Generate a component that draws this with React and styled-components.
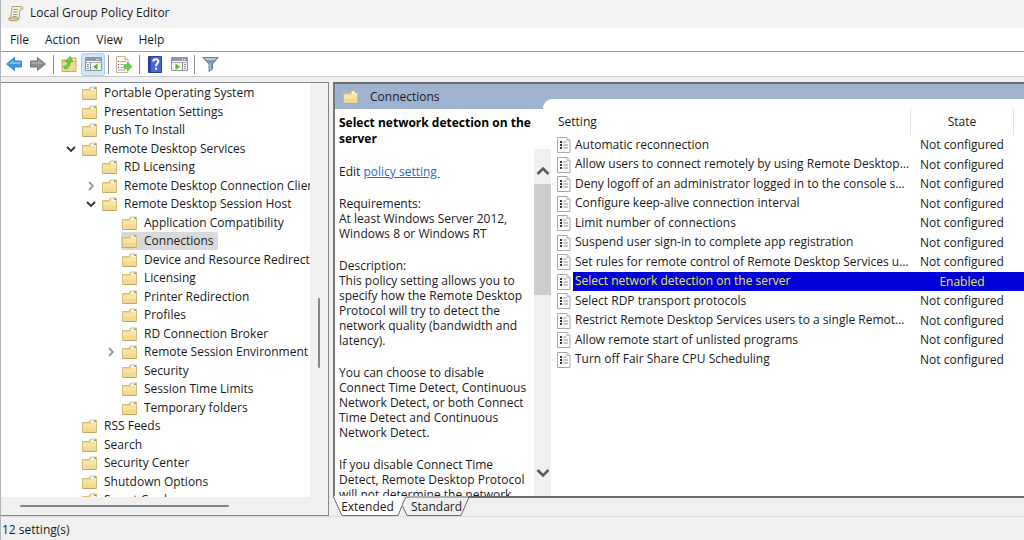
import React from "react";
import styled, { createGlobalStyle } from "styled-components";

const GlobalStyle = createGlobalStyle`
  *, *::before, *::after { box-sizing: border-box; }
  body {
    margin: 0;
    background: #f0f0f0;
    color: #1b1b1b;
    font-family: "Open Sans", "Noto Sans", sans-serif;
    font-size: 12px;
    line-height: 16px;
  }
  button { font: inherit; color: inherit; border: 0; background: none; padding: 0; }
  svg { display: block; flex: none; }
`;

const Window = styled.div`
  display: flex;
  flex-direction: column;
  height: 100vh;
  overflow: hidden;
  border-left: 1px solid #b4b4b8;
`;

const TitleBar = styled.header`
  display: flex;
  align-items: center;
  gap: 6px;
  height: 28px;
  flex: none;
  padding: 0 7px 2px;
  background: #f3f3f3;
`;

const Title = styled.h1`
  margin: 0;
  font-size: 12px;
  font-weight: 400;
`;

const MenuBar = styled.nav`
  display: flex;
  gap: 16px;
  height: 23px;
  flex: none;
  padding: 0 9px;
  background: #fff;
`;

const ToolBar = styled.div`
  display: flex;
  align-items: center;
  height: 26px;
  flex: none;
  padding-left: 1px;
  background: #fff;
  border-top: 1px solid #9a9aa2;
  border-bottom: 1px solid #c8c8c8;
`;

const ToolButton = styled.button`
  display: flex;
  align-items: center;
  justify-content: center;
  width: 24px;
  height: 23px;
  border-radius: 3px;
  background: ${(p) => (p.$active ? "#cce6fc" : "transparent")};
  border: 1px solid ${(p) => (p.$active ? "#a8d2f6" : "transparent")};
`;

const Divider = styled.span`
  width: 1px;
  height: 19px;
  margin: 0 3px;
  background: #8d8d8d;
`;

const Main = styled.main`
  display: grid;
  grid-template-columns: 328px minmax(0, 1fr);
  grid-template-rows: minmax(0, 1fr);
  gap: 4px;
  flex: 1;
  min-height: 0;
  padding: 5px 0 0;
`;

const TreePane = styled.section`
  display: grid;
  grid-template-columns: minmax(0, 1fr) 18px;
  grid-template-rows: minmax(0, 1fr) 18px;
  border: 1px solid #828790;
  border-left: 0;
  background: #f0f0f0;
`;

const Tree = styled.ul`
  margin: 0;
  padding: 1px 0 0;
  list-style: none;
  overflow: hidden;
  background: #fff;
`;

const TreeRow = styled.li`
  display: flex;
  align-items: center;
  height: 18px;
  padding-left: ${(p) => 64 + p.$level * 20}px;
  white-space: nowrap;
  &:nth-child(even) { height: 19px; }
`;

const Twisty = styled.span`
  display: flex;
  justify-content: center;
  width: 12px;
  margin-right: 4px;
  flex: none;
`;

const TreeLabel = styled.span`
  display: flex;
  align-items: center;
  gap: 6px;
  height: 18px;
  padding: 0 4px 0 1px;
  border-radius: 2px;
  background: ${(p) => (p.$selected ? "#d9d9d9" : "transparent")};
`;

const VerticalTrack = styled.div`
  display: flex;
  flex-direction: column;
  align-items: center;
`;

const HorizontalTrack = styled.div`
  display: flex;
  align-items: center;
  padding-left: 19px;
`;

const ThinThumb = styled.span`
  background: #868686;
  border-radius: 1px;
`;

const VerticalThumb = styled(ThinThumb)`
  width: 2px;
  height: 17%;
  margin-top: 215px;
`;

const HorizontalThumb = styled(ThinThumb)`
  width: 72%;
  height: 2px;
`;

const ResultPane = styled.section`
  display: flex;
  flex-direction: column;
  min-width: 0;
  min-height: 0;
`;

const ResultBody = styled.div`
  display: grid;
  grid-template-columns: 208px minmax(0, 1fr);
  grid-template-rows: 15px 10px minmax(0, 1fr);
  flex: 1;
  min-height: 0;
  background: #fff;
  border-top: 2px solid #696d74;
  border-left: 2px solid #76787c;
`;

const HeaderBand = styled.div`
  grid-area: 1 / 1 / 3 / 3;
  background: #9fb2cf;
`;

const PaneHeader = styled.h2`
  grid-area: 1 / 1 / 3 / 2;
  display: flex;
  align-items: center;
  gap: 11px;
  margin: 0;
  padding-left: 8px;
  font-size: 12px;
  font-weight: 400;
`;

const DescriptionPane = styled.article`
  grid-area: 3 / 1 / 4 / 2;
  z-index: 1;
  display: grid;
  grid-template-columns: minmax(0, 1fr) 17px;
  grid-template-rows: auto minmax(0, 1fr);
  margin-right: -8px;
  min-height: 0;
`;

const PolicyName = styled.h3`
  grid-column: 1 / 3;
  margin: 0;
  padding: 6px 19px 2px 4px;
  font-size: 12px;
  font-weight: 700;
  color: #000;
`;

const Description = styled.div`
  overflow: hidden;
  padding: 15px 4px 0 4px;
  line-height: 15px;
  p { margin: 0 0 17px; }
  a { color: #2a6bcb; white-space: pre; }
`;

const ScrollBar = styled.div`
  display: flex;
  flex-direction: column;
  justify-content: space-between;
  background: #f0f0f0;
`;

const ScrollUpper = styled.div`
  height: 42%;
  display: flex;
  flex-direction: column;
`;

const ScrollButton = styled.button`
  display: flex;
  align-items: center;
  justify-content: center;
  height: ${(p) => (p.$last ? 46 : 35)}px;
  padding-top: ${(p) => (p.$last ? 0 : 8)}px;
  flex: none;
`;

const ScrollThumb = styled.span`
  flex: 1;
  background: #cdcdcd;
`;

const SettingsArea = styled.div`
  grid-area: 2 / 2 / 4 / 3;
  padding: 10px 0 0 12px;
  background: #fff;
  border-top-left-radius: 9px;
  min-width: 0;
`;

const SettingsTable = styled.table`
  width: 100%;
  border-collapse: collapse;
  table-layout: fixed;
`;

const HeadCell = styled.th`
  width: ${(p) => (p.$width ? `${p.$width}px` : "auto")};
  height: 26px;
  padding: 0 3px;
  text-align: ${(p) => (p.$center ? "center" : "left")};
  font-weight: 400;
  border-right: 1px solid ${(p) => (p.$last ? "transparent" : "#e2e2e2")};
`;

const SettingRow = styled.tr`
  height: 20px;
  &:nth-child(even) { height: 19px; }
`;

const Cell = styled.td`
  padding: 0;
  text-align: ${(p) => (p.$center ? "center" : "left")};
  background: ${(p) => (p.$selected ? "#0000d8" : "transparent")};
  color: ${(p) => (p.$selected ? "#e6e65a" : "inherit")};
  white-space: nowrap;
`;

const SettingName = styled.div`
  display: flex;
  align-items: stretch;
  height: 19px;
`;

const IconSlot = styled.span`
  display: flex;
  align-items: center;
  flex: none;
  padding: 0 2px;
  background: #fff;
`;

const NameText = styled.span`
  flex: 1;
  min-width: 0;
  padding: 1px 0 2px 2px;
  overflow: hidden;
  text-overflow: ellipsis;
`;

const TabStrip = styled.div`
  display: flex;
  height: 20px;
  flex: none;
  background: #f0f0f0;
`;

const TabButton = styled.button`
  display: grid;
  width: 69px;
  height: 20px;
  svg, span { grid-area: 1 / 1; }
  span { z-index: 1; padding-top: 3px; }
`;

const TabRule = styled.span`
  flex: 1;
  border-top: 2px solid #6c6c6c;
  margin-left: -3px;
`;

const StatusBar = styled.footer`
  height: 24px;
  flex: none;
  padding: 5px 1px 0;
  border-top: 1px solid #dcdcdc;
`;

const Folder = () => (
  <svg width="16" height="16" viewBox="0 0 16 16">
    <path d="M.5 4.500h6.500l1.500-2.500h6v12H.5z" fill="#ecd38c" stroke="#d6bc78" />
    <path d="M9 2.500h5v2.500H9z" fill="#f8f5df" />
    <path d="M12 2.500h2v1.500h-2z" fill="#5b9fd0" />
    <path d="M1 6h7l1.500-1h4.500v8.500H1z" fill="#f8e4a6" />
    <path d="M1 9.500h13v4H1z" fill="#f3da92" />
    <path d="M.5 14.500h14" stroke="#c4a860" />
  </svg>
);

const Chevron = ({ open }) =>
  open ? (
    <svg width="10" height="8" viewBox="0 0 10 8">
      <path d="M1 2l4 4 4-4" fill="none" stroke="#333" strokeWidth="1.800" />
    </svg>
  ) : (
    <svg width="8" height="10" viewBox="0 0 8 10">
      <path d="M2 1l4 4-4 4" fill="none" stroke="#999" strokeWidth="1.800" />
    </svg>
  );

const ScrollArrow = ({ down }) => (
  <svg width="14" height="10" viewBox="0 0 14 10">
    <path d={down ? "M1.500 2l5.500 5.500L12.500 2" : "M1.500 8L7 2.500 12.500 8"} fill="none" stroke="#5c5c5c" strokeWidth="2.600" />
  </svg>
);

const PolicyIcon = () => (
  <svg width="14" height="16" viewBox="0 0 14 16">
    <path d="M.5.5h9.500l3 3v12H.5z" fill="#fcfcfc" stroke="#a8a8a8" />
    <path d="M10 .5v3h3" fill="#e4e4e4" stroke="#b9b9b9" />
    <path d="M3 4h2v2H3zM3 7h2v2H3zM3 10h2v2H3z" fill="#3a3a3a" />
    <path d="M6.500 5H9.500M6.500 8H11M6.500 11H11" stroke="#8b8ba6" />
  </svg>
);

const ScrollLogo = () => (
  <svg width="16" height="17" viewBox="0 0 16 17">
    <path d="M4 1.500h9.500c2 0 1.800 3.500 0 3.500H12l-1.200 9H2.500z" fill="#f5efd8" stroke="#b3a47c" />
    <path d="M1 13h9.500c.5 2-1 2.700-2 2.700h-6C.8 15.700.5 14 1 13z" fill="#e6d49c" stroke="#a8965f" />
    <path d="M5.500 4.500H10M5.200 7h4.600M5 9.500h4.500M4.700 11.500h4" stroke="#9b9b9b" />
    <path d="M12 2.500h2v1.500h-2z" fill="#d9bd6c" />
  </svg>
);

const Arrow = ({ right }) => (
  <svg width="18" height="16" viewBox="0 0 18 16">
    <path
      d={right ? "M1.500 5h7V1.500L16.500 8 8.500 14.500V11h-7z" : "M16.500 5h-7V1.500L1.500 8l8 6.500V11h7z"}
      fill={right ? "#8c8c8c" : "#3b98dc"}
      stroke={right ? "#747474" : "#3f8cc9"}
    />
    <path d={right ? "M2.500 6h7V4l5 4h-12z" : "M15.500 6h-7V4l-5 4h12z"} fill={right ? "#a6a6a6" : "#74c3f2"} />
  </svg>
);

const UpFolder = () => (
  <svg width="16" height="18" viewBox="0 0 16 18">
    <path d="M1 5h7l2-2h5v13.500H1z" fill="#e6c87c" stroke="#cba956" />
    <path d="M1.500 7.500h13V16h-13z" fill="#f0d78f" />
    <path d="M11 4h3v1.500h-3z" fill="#fff7da" />
    <path d="M2.500 11.500c3-.5 4.500-2.500 4.300-5H4L9 1.500l3 5H9.500c0 4-2.500 7-5.500 7.500z" fill="#6bcf3f" stroke="#4da32e" strokeWidth=".7" />
  </svg>
);

const PanelIcon = ({ right }) => (
  <svg width="17" height="16" viewBox="0 0 17 16">
    <path d="M.5 1.500h16v13H.5z" fill="#f8f8f8" stroke="#92969d" />
    <path d="M1 2h15v3H1z" fill="#9297a0" />
    <path d="M11 3.500h1M13 3.500h1" stroke="#fff" />
    <path d="M.5 6.500h16" stroke="#a8acb2" />
    <path d={right ? "M11.500 6v8" : "M5.500 6v8"} stroke="#8b8f96" />
    <path d={right ? "M13 8.500h2M13 10.500h2M13 12.500h2" : "M2 8.500h2M2 10.500h2M2 12.500h2"} stroke="#8b8f96" />
    <path d={right ? "M4.500 7.500l4.500 3.200-4.500 3.300z" : "M12.500 7.500L8 10.700l4.500 3.300z"} fill="#52b82f" />
  </svg>
);

const ExportIcon = () => (
  <svg width="18" height="17" viewBox="0 0 18 17">
    <path d="M1.500.5h8.500l3 3v13H1.500z" fill="#fbf8e8" stroke="#c0b89c" />
    <path d="M10 .5v3h3" fill="#eee8cf" stroke="#c0b89c" />
    <path d="M3 5.500h1M3 8.500h1M3 11.500h1" stroke="#555" />
    <path d="M5.500 5.500H11M5.500 8.500h3M5.500 11.500h3M3 14h8" stroke="#a8a8b4" />
    <path d="M9 8.500h3.500V6l4.500 4.500-4.500 4.500v-2.500H9z" fill="#6ccd44" stroke="#55b035" strokeWidth=".6" />
  </svg>
);

const HelpIcon = () => (
  <svg width="14" height="17" viewBox="0 0 14 17">
    <path d="M.5.5h13v16H.5z" fill="#4a66d4" stroke="#2c3c9c" />
    <path d="M1 1h2v15H1z" fill="#2f44a4" />
    <path d="M5.300 5.500c0-3 5-3 5-.2 0 2-2.300 2.200-2.300 5" fill="none" stroke="#fff" strokeWidth="2" />
    <path d="M7 11.800h2v2H7z" fill="#fff" />
  </svg>
);

const FilterIcon = () => (
  <svg width="17" height="16" viewBox="0 0 17 16">
    <path d="M.8 1.500h15.400L10.500 8v5l-3.500 2.500V8z" fill="#7c93a8" stroke="#6b8196" />
    <path d="M2.500 2h12l-2 2.200h-8z" fill="#b9c9d6" />
    <path d="M7.500 7h1.200v7H7.500z" fill="#b4c8d8" />
  </svg>
);

const TREE = [
  [0, "Portable Operating System"],
  [0, "Presentation Settings"],
  [0, "Push To Install"],
  [0, "Remote Desktop Services", "open"],
  [1, "RD Licensing"],
  [1, "Remote Desktop Connection Client", "closed"],
  [1, "Remote Desktop Session Host", "open"],
  [2, "Application Compatibility"],
  [2, "Connections"],
  [2, "Device and Resource Redirection"],
  [2, "Licensing"],
  [2, "Printer Redirection"],
  [2, "Profiles"],
  [2, "RD Connection Broker"],
  [2, "Remote Session Environment", "closed"],
  [2, "Security"],
  [2, "Session Time Limits"],
  [2, "Temporary folders"],
  [0, "RSS Feeds"],
  [0, "Search"],
  [0, "Security Center"],
  [0, "Shutdown Options"],
  [0, "Smart Card"],
];

const SETTINGS = [
  "Automatic reconnection",
  "Allow users to connect remotely by using Remote Desktop Services",
  "Deny logoff of an administrator logged in to the console session",
  "Configure keep-alive connection interval",
  "Limit number of connections",
  "Suspend user sign-in to complete app registration",
  "Set rules for remote control of Remote Desktop Services user sessions",
  "Select network detection on the server",
  "Select RDP transport protocols",
  "Restrict Remote Desktop Services users to a single Remote Desktop Services session",
  "Allow remote start of unlisted programs",
  "Turn off Fair Share CPU Scheduling",
];

const SELECTED = "Select network detection on the server";

export default function App() {
  return (
    <Window>
      <GlobalStyle />
      <TitleBar>
        <ScrollLogo />
        <Title>Local Group Policy Editor</Title>
      </TitleBar>
      <MenuBar>
        {["File", "Action", "View", "Help"].map((m) => (
          <button key={m}>{m}</button>
        ))}
      </MenuBar>
      <ToolBar>
        <ToolButton aria-label="Back"><Arrow /></ToolButton>
        <ToolButton aria-label="Forward"><Arrow right /></ToolButton>
        <Divider />
        <ToolButton aria-label="Up one level"><UpFolder /></ToolButton>
        <ToolButton aria-label="Show console tree" $active><PanelIcon /></ToolButton>
        <Divider />
        <ToolButton aria-label="Export list"><ExportIcon /></ToolButton>
        <Divider />
        <ToolButton aria-label="Help"><HelpIcon /></ToolButton>
        <ToolButton aria-label="Show action pane"><PanelIcon right /></ToolButton>
        <Divider />
        <ToolButton aria-label="Filter"><FilterIcon /></ToolButton>
      </ToolBar>
      <Main>
        <TreePane>
          <Tree>
            {TREE.map(([level, label, state]) => (
              <TreeRow key={label} $level={level}>
                <Twisty>{state && <Chevron open={state === "open"} />}</Twisty>
                <TreeLabel $selected={label === "Connections"}>
                  <Folder />
                  {label}
                </TreeLabel>
              </TreeRow>
            ))}
          </Tree>
          <VerticalTrack><VerticalThumb /></VerticalTrack>
          <HorizontalTrack><HorizontalThumb /></HorizontalTrack>
        </TreePane>
        <ResultPane>
          <ResultBody>
            <HeaderBand />
            <PaneHeader><Folder />Connections</PaneHeader>
            <DescriptionPane>
              <PolicyName>Select network detection on the server</PolicyName>
              <Description>
                <p>Edit <a href="#policy">{"policy setting "}</a></p>
                <p>Requirements:<br />At least Windows Server 2012, Windows 8 or Windows RT</p>
                <p>
                  Description:<br />This policy setting allows you to specify how the Remote
                  Desktop Protocol will try to detect the network quality (bandwidth and latency).
                </p>
                <p>
                  You can choose to disable Connect Time Detect, Continuous Network Detect, or
                  both Connect Time Detect and Continuous Network Detect.
                </p>
                <p>
                  If you disable Connect Time Detect, Remote Desktop Protocol will not determine
                  the network quality at the connect time.
                </p>
              </Description>
              <ScrollBar>
                <ScrollUpper>
                  <ScrollButton aria-label="Scroll up"><ScrollArrow /></ScrollButton>
                  <ScrollThumb />
                </ScrollUpper>
                <ScrollButton $last aria-label="Scroll down"><ScrollArrow down /></ScrollButton>
              </ScrollBar>
            </DescriptionPane>
            <SettingsArea>
              <SettingsTable>
                <thead>
                  <tr>
                    <HeadCell>Setting</HeadCell>
                    <HeadCell $width={103} $center>State</HeadCell>
                    <HeadCell $width={10} $last />
                  </tr>
                </thead>
                <tbody>
                  {SETTINGS.map((name) => {
                    const selected = name === SELECTED;
                    return (
                      <SettingRow key={name}>
                        <Cell $selected={selected}>
                          <SettingName>
                            <IconSlot><PolicyIcon /></IconSlot>
                            <NameText>{name}</NameText>
                          </SettingName>
                        </Cell>
                        <Cell $center $selected={selected}>{selected ? "Enabled" : "Not configured"}</Cell>
                        <Cell $selected={selected} />
                      </SettingRow>
                    );
                  })}
                </tbody>
              </SettingsTable>
            </SettingsArea>
          </ResultBody>
          <TabStrip>
            <TabButton>
              <svg width="69" height="20" viewBox="0 0 69 20">
                <path d="M0 0l9 19.500h56L69 10V0z" fill="#fff" />
                <path d="M0 0l9 19.500h56L69 10" fill="none" stroke="#6c6c6c" />
              </svg>
              <span>Extended</span>
            </TabButton>
            <TabButton>
              <svg width="69" height="20" viewBox="0 0 69 20">
                <path d="M4 1L0 9l5 10.500h54L67 1z" fill="#f0f0f0" stroke="#6c6c6c" />
              </svg>
              <span>Standard</span>
            </TabButton>
            <TabRule />
          </TabStrip>
        </ResultPane>
      </Main>
      <StatusBar>12 setting(s)</StatusBar>
    </Window>
  );
}
